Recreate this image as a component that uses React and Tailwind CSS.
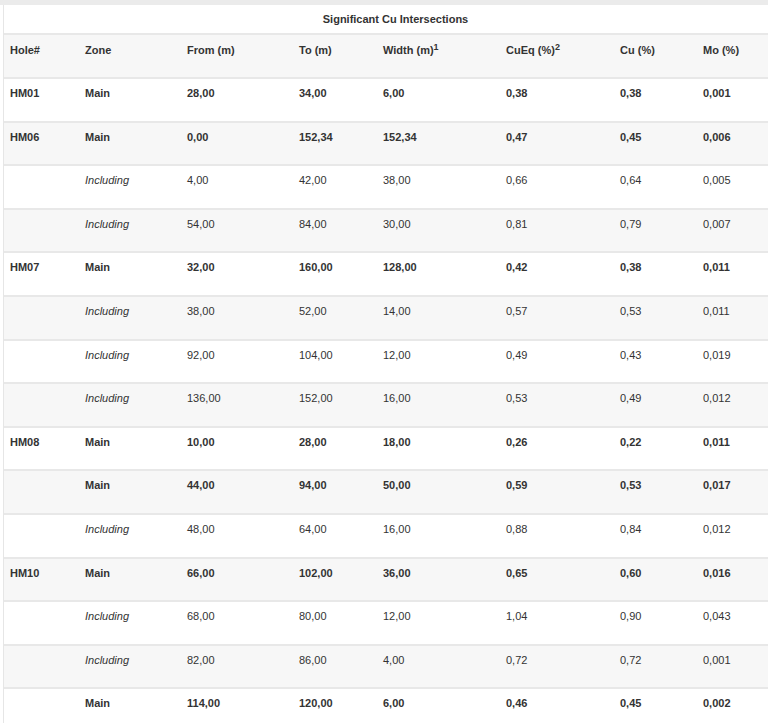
import React from "react";

const cols = "grid grid-cols-[75px_102px_112px_84px_123px_114px_83px_1fr]";

const rows = [
    { hole: "HM01", zone: "Main", v: ["28,00", "34,00", "6,00", "0,38", "0,38", "0,001"] },
    { hole: "HM06", zone: "Main", v: ["0,00", "152,34", "152,34", "0,47", "0,45", "0,006"] },
    { hole: "", zone: "Including", v: ["4,00", "42,00", "38,00", "0,66", "0,64", "0,005"] },
    { hole: "", zone: "Including", v: ["54,00", "84,00", "30,00", "0,81", "0,79", "0,007"] },
    { hole: "HM07", zone: "Main", v: ["32,00", "160,00", "128,00", "0,42", "0,38", "0,011"] },
    { hole: "", zone: "Including", v: ["38,00", "52,00", "14,00", "0,57", "0,53", "0,011"] },
    { hole: "", zone: "Including", v: ["92,00", "104,00", "12,00", "0,49", "0,43", "0,019"] },
    { hole: "", zone: "Including", v: ["136,00", "152,00", "16,00", "0,53", "0,49", "0,012"] },
    { hole: "HM08", zone: "Main", v: ["10,00", "28,00", "18,00", "0,26", "0,22", "0,011"] },
    { hole: "", zone: "Main", v: ["44,00", "94,00", "50,00", "0,59", "0,53", "0,017"] },
    { hole: "", zone: "Including", v: ["48,00", "64,00", "16,00", "0,88", "0,84", "0,012"] },
    { hole: "HM10", zone: "Main", v: ["66,00", "102,00", "36,00", "0,65", "0,60", "0,016"] },
    { hole: "", zone: "Including", v: ["68,00", "80,00", "12,00", "1,04", "0,90", "0,043"] },
    { hole: "", zone: "Including", v: ["82,00", "86,00", "4,00", "0,72", "0,72", "0,001"] },
    { hole: "", zone: "Main", v: ["114,00", "120,00", "6,00", "0,46", "0,45", "0,002"] },
];

const App = () => {
    return (
        <div className="w-[768px] h-[723px] overflow-hidden bg-white text-[11px] leading-[13px] text-[#333]" style={{ fontFamily: '"Liberation Sans", Arial, sans-serif' }}>
            <div className="h-[5px] bg-[#ebebeb]" />
            <div className="ml-[3px] w-[784px] border-l border-[#e6e6e6]">
                {/* title */}
                <div className="h-[30px] flex items-center justify-center font-bold border-b-2 border-[#e8e8e8]">
                    Significant Cu Intersections
                </div>

                {/* header */}
                <div className={`${cols} h-[44px] bg-[#f7f7f7] font-bold border-b-2 border-[#e8e8e8] pt-[9px]`}>
                    <div className="pl-[6px]">Hole#</div>
                    <div className="pl-[6px]">Zone</div>
                    <div className="pl-[6px]">From (m)</div>
                    <div className="pl-[6px]">To (m)</div>
                    <div className="pl-[6px]">Width (m)<sup className="text-[9px]">1</sup></div>
                    <div className="pl-[6px]">CuEq (%)<sup className="text-[9px]">2</sup></div>
                    <div className="pl-[6px]">Cu (%)</div>
                    <div className="pl-[6px]">Mo (%)</div>
                </div>

                {rows.map((r, i) => {
                    const main = r.zone === "Main";
                    return (
                        <div
                            key={i}
                            className={`${cols} h-[43.6px] pt-[8px] border-b-2 border-[#e8e8e8] ${i % 2 === 1 ? "bg-[#f7f7f7]" : "bg-white"} ${main ? "font-bold" : ""}`}
                        >
                            <div className="pl-[6px] font-bold">{r.hole}</div>
                            <div className={`pl-[6px] ${main ? "" : "italic"}`}>{r.zone}</div>
                            {r.v.map((x, j) => (
                                <div key={j} className="pl-[6px]">{x}</div>
                            ))}
                        </div>
                    );
                })}
            </div>
        </div>
    );
};

export default App;
